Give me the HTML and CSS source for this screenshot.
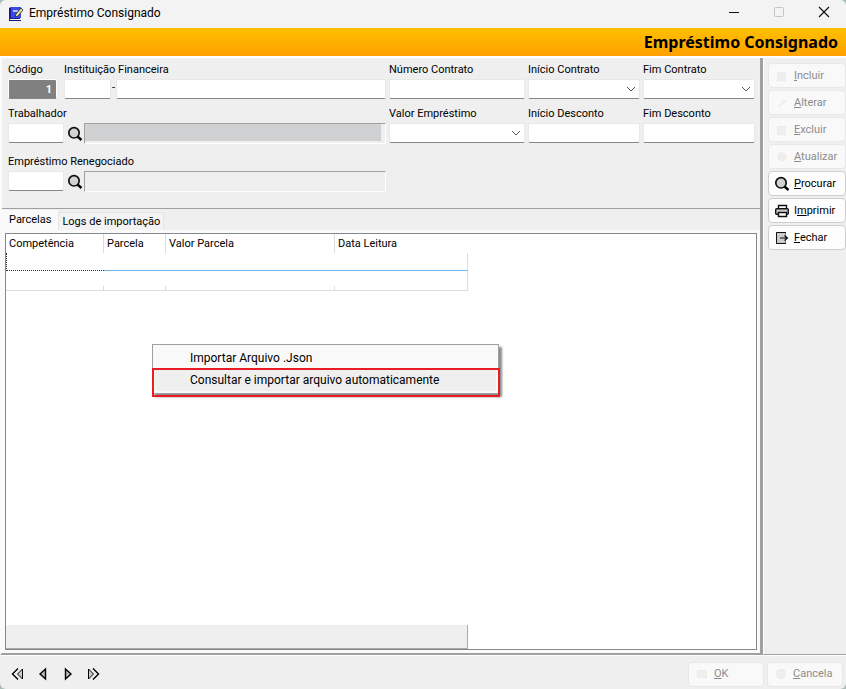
FILE: index.html
```html
<!DOCTYPE html>
<html lang="pt-BR">
<head>
    <meta charset="UTF-8">
    <meta name="viewport" content="width=device-width, initial-scale=1.0">
    <title>Empréstimo Consignado</title>
    <link rel="stylesheet" href="styles.css">
</head>
<body>
    <svg class="defs" width="0" height="0" aria-hidden="true">
        <symbol id="lupa" viewBox="0 0 16 16">
            <path d="M10.5 10.5L14.5 14" stroke="#000" stroke-width="2.4" fill="none"/>
            <circle cx="7" cy="6.8" r="5.2" fill="#d3d3d3" stroke="#111" stroke-width="1.7"/>
        </symbol>
        <symbol id="seta" viewBox="0 0 10 6">
            <path d="M1 1L5 5L9 1" fill="none" stroke="#5a5a5a"/>
        </symbol>
    </svg>

    <div class="window">
        <header class="titlebar">
            <svg class="app-icon" width="16" height="16" viewBox="0 0 16 16">
                <path d="M1 2L3 1H12V13L10 14H1Z" fill="#1a1a8c"/>
                <path d="M3 1H13V12H3Z" fill="#3a48ec"/>
                <path d="M2 13H12V14H2Z" fill="#fff"/>
                <path d="M1 14H13V15H1Z" fill="#15157a"/>
                <path d="M5 4H10V6H5Z" fill="#b9c4ff"/>
                <path d="M7 11L8 8L13 2L15 4L10 10Z" fill="#e8e49a" stroke="#222" stroke-width=".8"/>
            </svg>
            <span class="caption">Empréstimo Consignado</span>
            <button class="win-btn" aria-label="Minimizar"><svg width="12" height="12"><path d="M1 6.5H11" stroke="#111"/></svg></button>
            <button class="win-btn" aria-label="Maximizar" disabled><svg width="12" height="12"><rect x="1.5" y="1.5" width="9" height="9" rx="1" fill="none" stroke="#c4c4c4"/></svg></button>
            <button class="win-btn" aria-label="Fechar janela"><svg width="12" height="12"><path d="M1 1L11 11M11 1L1 11" stroke="#111" stroke-width="1.2"/></svg></button>
        </header>
        <h1>Empréstimo Consignado</h1>

        <div class="content">
            <main>
                <form id="contrato">
                    <div class="row">
                        <div class="group">
                            <div class="field code">
                                <label for="codigo">Código</label>
                                <input type="text" id="codigo" class="current" value="1">
                            </div>
                            <div class="field grow">
                                <label for="instituicao">Instituição Financeira</label>
                                <div class="inline">
                                    <input type="text" id="instituicao" class="short">
                                    <span class="dash">-</span>
                                    <input type="text" id="instituicaoNome" aria-label="Nome da instituição">
                                </div>
                            </div>
                        </div>
                        <div class="field">
                            <label for="numero">Número Contrato</label>
                            <input type="text" id="numero">
                        </div>
                        <div class="field">
                            <label for="inicio">Início Contrato</label>
                            <div class="combo"><select id="inicio"><option></option></select><svg width="10" height="6"><use href="#seta"/></svg></div>
                        </div>
                        <div class="field">
                            <label for="fim">Fim Contrato</label>
                            <div class="combo"><select id="fim"><option></option></select><svg width="10" height="6"><use href="#seta"/></svg></div>
                        </div>
                    </div>
                    <div class="row">
                        <div class="field">
                            <label for="trabalhador">Trabalhador</label>
                            <div class="inline">
                                <input type="text" id="trabalhador" class="lookup">
                                <button type="button" class="search" aria-label="Procurar trabalhador"><svg width="16" height="16"><use href="#lupa"/></svg></button>
                                <output class="display filled" for="trabalhador"></output>
                            </div>
                        </div>
                        <div class="field">
                            <label for="valor">Valor Empréstimo</label>
                            <div class="combo"><select id="valor"><option></option></select><svg width="10" height="6"><use href="#seta"/></svg></div>
                        </div>
                        <div class="field">
                            <label for="inicioDesc">Início Desconto</label>
                            <input type="text" id="inicioDesc">
                        </div>
                        <div class="field">
                            <label for="fimDesc">Fim Desconto</label>
                            <input type="text" id="fimDesc">
                        </div>
                    </div>
                    <div class="row last">
                        <div class="field">
                            <label for="renegociado">Empréstimo Renegociado</label>
                            <div class="inline">
                                <input type="text" id="renegociado" class="lookup">
                                <button type="button" class="search" aria-label="Procurar empréstimo"><svg width="16" height="16"><use href="#lupa"/></svg></button>
                                <output class="display" for="renegociado"></output>
                            </div>
                        </div>
                    </div>
                </form>

                <div class="tabs" role="tablist">
                    <button class="tab active" role="tab" aria-selected="true">Parcelas</button>
                    <button class="tab" role="tab" aria-selected="false">Logs de importação</button>
                </div>
                <div class="tab-page">
                    <div class="grid">
                        <table>
                            <colgroup><col class="c1"><col class="c2"><col class="c3"><col class="c4"></colgroup>
                            <thead>
                                <tr><th>Competência</th><th>Parcela</th><th>Valor Parcela</th><th>Data Leitura</th></tr>
                            </thead>
                            <tbody>
                                <tr class="selected"><td></td><td></td><td></td><td></td></tr>
                                <tr class="end"><td></td><td></td><td></td><td></td></tr>
                            </tbody>
                        </table>
                        <div class="grid-footer"></div>
                    </div>
                </div>
            </main>

            <aside>
                <button class="action" disabled><svg width="16" height="16"><path d="M2 3H13V14H2Z" fill="#eee" stroke="#fff"/></svg><span><u>I</u>ncluir</span></button>
                <button class="action" disabled><svg width="16" height="16"><path d="M2 14L3 10L10 3L14 6L6 13Z" fill="#f1f1f1" stroke="#fff"/></svg><span><u>A</u>lterar</span></button>
                <button class="action" disabled><svg width="16" height="16"><path d="M2 3H13V14H2Z" fill="#eee" stroke="#fff"/></svg><span><u>E</u>xcluir</span></button>
                <button class="action" disabled><svg width="16" height="16"><circle cx="8" cy="8" r="5.5" fill="#eee" stroke="#fff"/></svg><span><u>A</u>tualizar</span></button>
                <button class="action"><svg width="16" height="16"><use href="#lupa"/></svg><span><u>P</u>rocurar</span></button>
                <button class="action">
                    <svg width="16" height="16">
                        <path d="M4.5 6V2.5H12.5V6" fill="#fff" stroke="#111" stroke-width="1.4"/>
                        <rect x="1.7" y="5.7" width="12.6" height="5.6" rx="1" fill="#ccc" stroke="#111" stroke-width="1.4"/>
                        <path d="M4.5 9.5H12.5V13.5H4.5Z" fill="#fff" stroke="#111" stroke-width="1.4"/>
                    </svg>
                    <span>I<u>m</u>primir</span>
                </button>
                <button class="action">
                    <svg width="16" height="16">
                        <path d="M2.5 2.5H11.5V13.5H2.5Z" fill="#ccc" stroke="#777"/>
                        <path d="M12 2.5H2.5V13.5H12" fill="none" stroke="#111"/>
                        <path d="M6 8H13.5M10.5 5.5L13.5 8L10.5 10.5" fill="none" stroke="#111" stroke-width="1.2"/>
                    </svg>
                    <span><u>F</u>echar</span>
                </button>
            </aside>
        </div>

        <footer>
            <nav>
                <button class="nav-btn" aria-label="Primeiro"><svg width="14" height="14"><path d="M7 1.5L1.5 7L7 12.5" fill="none" stroke="#000" stroke-width="1.4"/><path d="M11.5 2V12L6.5 7Z" fill="#ccc" stroke="#000"/></svg></button>
                <button class="nav-btn" aria-label="Anterior"><svg width="14" height="14"><path d="M9.5 2V12L4 7Z" fill="#bbb" stroke="#000" stroke-width="1.4"/></svg></button>
                <button class="nav-btn" aria-label="Próximo"><svg width="14" height="14"><path d="M4.5 2V12L10 7Z" fill="#bbb" stroke="#000" stroke-width="1.4"/></svg></button>
                <button class="nav-btn" aria-label="Último"><svg width="14" height="14"><path d="M2.5 2V12L7.5 7Z" fill="#ccc" stroke="#000"/><path d="M7 1.5L12.5 7L7 12.5" fill="none" stroke="#000" stroke-width="1.4"/></svg></button>
            </nav>
            <button class="action" disabled><svg width="16" height="16"><path d="M2 3H14V13H2Z" fill="#eee" stroke="#fff"/></svg><span><u>O</u>K</span></button>
            <button class="action" disabled><svg width="16" height="16"><circle cx="8" cy="8" r="6" fill="#eee" stroke="#fff"/></svg><span><u>C</u>ancela</span></button>
        </footer>

        <div class="context-menu" role="menu">
            <button role="menuitem">Importar Arquivo .Json</button>
            <button role="menuitem" class="hover">Consultar e importar arquivo automaticamente</button>
            <div class="highlight"></div>
        </div>
    </div>
</body>
</html>
```
FILE: styles.css
```css
* {
    box-sizing: border-box;
}
html {
    background-color: #a9bcb9;
}
body {
    margin: 0;
    font-family: Roboto, "Liberation Sans", sans-serif;
    font-size: 11px;
    line-height: 14px;
    color: #000;
}
button, input, select {
    font: inherit;
    color: inherit;
    margin: 0;
    padding: 0;
    border: none;
    background: none;
}
svg {
    display: block;
    flex: none;
}
.defs {
    position: absolute;
}
.window {
    position: relative;
    display: flex;
    flex-direction: column;
    min-height: 100vh;
    background-color: #efefef;
    border-radius: 6px;
    overflow: hidden;
}

/* title */
.titlebar {
    display: flex;
    align-items: center;
    height: 28px;
    padding-left: 8px;
    background-color: #f3f3f3;
}
.caption {
    flex: 1;
    margin-left: 5px;
    padding-bottom: 2px;
    font-size: 12px;
    line-height: 16px;
}
.win-btn {
    display: flex;
    justify-content: center;
    width: 45px;
    padding-bottom: 4px;
}
h1 {
    margin: 0;
    padding: 0 8px;
    font-family: "Noto Sans", sans-serif;
    font-size: 16px;
    line-height: 28px;
    text-align: right;
    background: linear-gradient(#ffc000, #ffa000);
}

.content {
    display: flex;
    flex: 1;
    border-top: 2px solid #fff;
}
main {
    display: flex;
    flex-direction: column;
    flex: 1;
    border-left: 2px solid #fafafa;
    border-right: 3px solid #a0a0a0;
    border-bottom: 2px solid #a0a0a0;
}

/* form */
form {
    padding: 5px 5px 0 6px;
    height: 151px;
    border-bottom: 1px solid #a0a0a0;
}
.row {
    display: grid;
    grid-template-columns: 378fr 136fr 112fr 112fr;
    column-gap: 3px;
    height: 44px;
}
.row.last {
    padding-top: 4px;
}
.group {
    display: flex;
    gap: 7px;
}
.field label {
    display: block;
    height: 16px;
    white-space: nowrap;
}
.code {
    width: 49px;
}
.grow {
    flex: 1;
}
.inline {
    display: flex;
}
input, select {
    display: block;
    width: 100%;
    min-width: 0;
    height: 20px;
    padding: 0 4px;
    background-color: #fff;
    border: 1px solid #e8e8e8;
    border-bottom-color: #868686;
    border-radius: 2px;
}
input.current {
    background-color: #808080;
    color: #fff;
    font-weight: bold;
    text-align: right;
    border-color: #fff;
    border-bottom-color: #868686;
}
input.short {
    flex: none;
    width: 47px;
}
input.lookup {
    flex: none;
    width: 56px;
}
.dash {
    width: 6px;
    text-align: center;
    line-height: 18px;
}
.combo {
    position: relative;
}
.combo select {
    appearance: none;
}
.combo svg {
    position: absolute;
    right: 4px;
    top: 7px;
    pointer-events: none;
}
.search {
    width: 20px;
    padding-left: 3px;
}
.display {
    flex: 1;
    height: 21px;
    border: 1px solid #fff;
    border-top-color: #a0a0a0;
    border-left-color: #a0a0a0;
}
.display.filled {
    background: #d0d1d3;
    box-shadow: inset -4px -2px #efefef;
}

/* tabs */
.tabs {
    display: flex;
    align-items: flex-end;
    height: 21px;
    padding-top: 1px;
}
.tab {
    height: 18px;
    padding: 0 3px;
    border: 1px solid #e5e5e5;
    border-bottom: none;
    background-color: #f3f3f3;
}
.tab.active {
    height: 20px;
    padding: 0 6px 2px;
    background-color: #fafafa;
    border-color: #fafafa;
}
.tab-page {
    display: flex;
    flex: 1;
    padding: 3px;
    background-color: #fafafa;
}
.grid {
    display: flex;
    flex-direction: column;
    justify-content: space-between;
    flex: 1;
    background-color: #fff;
    border: 1px solid #828790;
}
table {
    width: 462px;
    table-layout: fixed;
    border-collapse: separate;
    border-spacing: 0;
}
.c1 {
    width: 98px;
}
.c2 {
    width: 62px;
}
.c3 {
    width: 169px;
}
th {
    height: 19px;
    padding: 0 3px;
    font-weight: normal;
    text-align: left;
    border-right: 1px solid #dcdcdc;
}
th:last-child {
    border-right: none;
}
td {
    height: 20px;
    padding: 0;
    border-bottom: 1px solid #dcdcdc;
}
td:last-child {
    border-right: 1px solid #dcdcdc;
}
.selected td {
    height: 18px;
    border-bottom: 1px solid #6db5ec;
}
.selected td:first-child {
    border-left: 1px dotted #333;
    border-bottom: 1px dotted #333;
}
.end td:not(:last-child) {
    background: linear-gradient(#dcdcdc, #dcdcdc) right bottom / 1px 4px no-repeat;
}
.grid-footer {
    width: 462px;
    height: 24px;
    background-color: #efefef;
    border-right: 1px solid #a9a9a9;
    border-bottom: 1px solid #a9a9a9;
}

/* side buttons */
aside {
    display: flex;
    flex-direction: column;
    gap: 2px;
    width: 83px;
    padding: 5px 0 0 4px;
    border-left: 1px solid #fff;
    border-bottom: 1px solid #a0a0a0;
}
.action {
    display: flex;
    align-items: center;
    gap: 4px;
    width: 78px;
    height: 25px;
    padding-left: 5px;
    background-color: #fdfdfd;
    border: 1px solid #cfcfcf;
    border-radius: 4px;
}
.action:disabled {
    color: #8c8c8c;
    background-color: #f9f9f9;
    border-color: #e8e8e8;
}

footer {
    display: flex;
    align-items: center;
    gap: 3px;
    height: 34px;
    padding: 3px 3px 0 8px;
    border-top: 1px solid #fff;
}
footer .action {
    width: 76px;
}
nav {
    display: flex;
    gap: 5px;
    flex: 1;
}
.nav-btn {
    display: flex;
    justify-content: center;
    width: 20px;
}

/* popup */
.context-menu {
    position: absolute;
    left: 152px;
    top: 344px;
    width: 347px;
    padding: 2px;
    background-color: #f9f9f9;
    border: 1px solid #a0a0a0;
    box-shadow: 3px 3px 2px rgba(0, 0, 0, 0.45);
    font-size: 12px;
}
.context-menu button {
    display: block;
    width: 100%;
    height: 22px;
    padding-left: 35px;
    text-align: left;
}
.context-menu .hover {
    background-color: #efefef;
    border-radius: 3px;
}
.highlight {
    position: absolute;
    left: -1px;
    right: -2px;
    top: 23px;
    height: 29px;
    border: 2px solid #e81c24;
}
```
